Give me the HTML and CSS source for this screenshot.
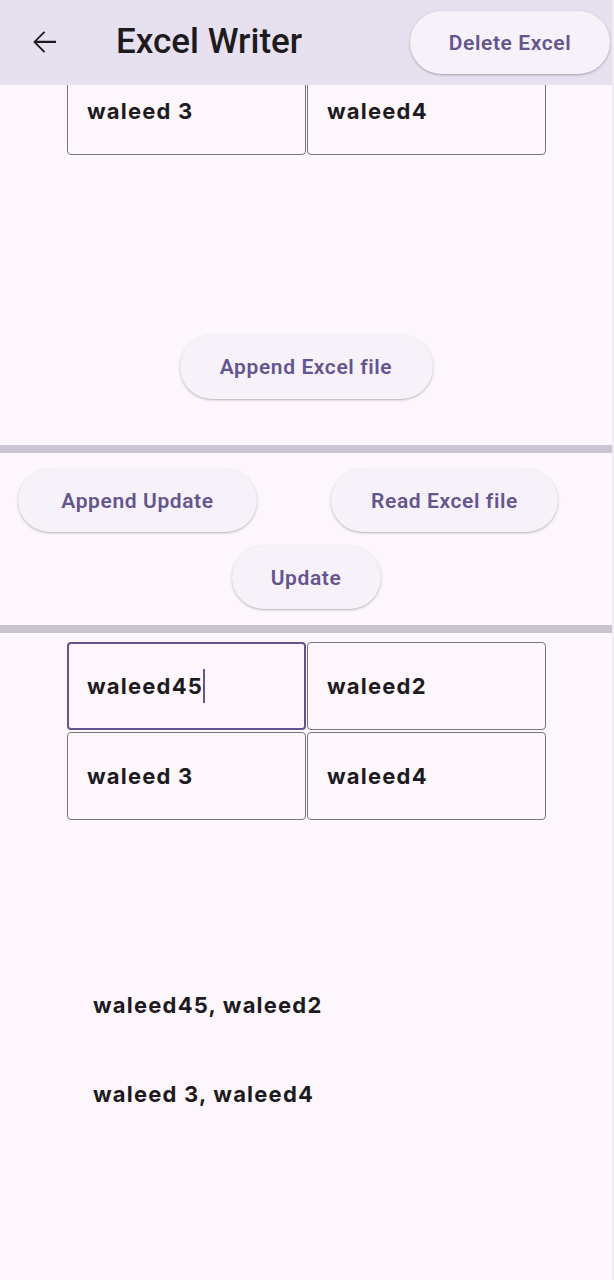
FILE: index.html
```html
<!DOCTYPE html>
<html>
<head>
<meta charset="utf-8">
<link rel="stylesheet" href="styles.css">
</head>
<body>
<div class="screen">
  <header class="appbar">
    <svg class="back" width="36" height="36" viewBox="0 0 24 24"><path d="M20 11.2H7.2l5.6-5.6L11.9 4.8 4.8 12l7.1 7.2.9-.9-5.6-5.6H20v-1.5z" fill="#1d1b20"/></svg>
    <h1 class="title">Excel Writer</h1>
    <button class="pill delete">Delete Excel</button>
  </header>
  <main class="content">
    <div class="clip">
      <div class="grid shifted">
        <div class="cell">waleed 3</div>
        <div class="cell">waleed4</div>
      </div>
    </div>
    <div class="row center first-btn">
      <button class="pill btn-append">Append Excel file</button>
    </div>
    <div class="divider d1"></div>
    <div class="row pair">
      <button class="pill btn-au">Append Update</button>
      <button class="pill btn-read">Read Excel file</button>
    </div>
    <div class="row center upd">
      <button class="pill btn-upd">Update</button>
    </div>
    <div class="divider d2"></div>
    <div class="grid fields">
      <div class="cell focused">waleed45<span class="caret"></span></div>
      <div class="cell">waleed2</div>
      <div class="cell">waleed 3</div>
      <div class="cell">waleed4</div>
    </div>
    <div class="results">
      <p class="line">waleed45, waleed2</p>
      <p class="line">waleed 3, waleed4</p>
    </div>
  </main>
</div>
</body>
</html>
```
FILE: styles.css
```css
html, body {
  margin: 0;
  padding: 0;
  background: #fdf7fd;
}
.screen {
  width: 614px;
  height: 1280px;
  overflow: hidden;
  background: #fdf7fd;
  font-family: Roboto, "Noto Sans", sans-serif;
  color: #1d1b20;
  box-sizing: border-box;
  border-right: 2px solid #f1ebf3;
}
.appbar {
  height: 85px;
  background: #e7e0ef;
  display: flex;
  align-items: center;
  box-sizing: border-box;
  padding-left: 26px;
  padding-bottom: 2px;
}
.back {
  display: block;
  flex: none;
}
.title {
  margin: 0 0 0 54px;
  font-size: 35px;
  font-weight: 500;
  letter-spacing: 0;
  flex: 1;
}
.pill {
  font-family: Roboto, "Noto Sans", sans-serif;
  font-weight: 600;
  font-size: 21px;
  letter-spacing: 0.6px;
  color: #65558f;
  background: #f7f2fa;
  border: none;
  border-radius: 32px;
  height: 63px;
  box-shadow: 0 1px 3px rgba(0,0,0,0.22), 0 1px 1px rgba(0,0,0,0.08);
  padding: 0;
  box-sizing: border-box;
}
.delete {
  width: 200px;
  margin-right: 2px;
  margin-top: 2px;
}
.content {
  display: flex;
  flex-direction: column;
}
.clip {
  height: 70px;
  overflow: hidden;
}
.grid {
  display: grid;
  grid-template-columns: 239px 239px;
  column-gap: 1px;
  row-gap: 2px;
  margin-left: 67px;
}
.shifted {
  margin-top: -18px;
}
.cell {
  height: 88px;
  box-sizing: border-box;
  border: 1px solid #79747e;
  border-radius: 4px;
  display: flex;
  align-items: center;
  padding-left: 19px;
  font-family: Inter, "Noto Sans", sans-serif;
  font-weight: 700;
  font-size: 22px;
  letter-spacing: 1.2px;
  color: #1d1b20;
}
.cell.focused {
  border: 2px solid #65558f;
  padding-left: 18px;
}
.caret {
  display: inline-block;
  width: 2px;
  height: 34px;
  background: #65558f;
  margin-left: 0;
}
.row {
  display: flex;
}
.center {
  justify-content: center;
}
.first-btn {
  margin-top: 180px;
}
.btn-append {
  width: 253px;
  height: 64px;
}
.divider {
  height: 8px;
  background: #cac4d0;
}
.d1 {
  margin-top: 46px;
}
.pair {
  margin-top: 16px;
  padding-left: 18px;
  gap: 74px;
}
.btn-au {
  width: 239px;
}
.btn-read {
  width: 227px;
}
.upd {
  margin-top: 14px;
}
.btn-upd {
  width: 149px;
}
.d2 {
  margin-top: 16px;
}
.fields {
  margin-top: 9px;
}
.results {
  padding-left: 93px;
  margin-top: 170px;
}
.line {
  margin: 0;
  height: 89px;
  line-height: 30px;
  font-family: Inter, "Noto Sans", sans-serif;
  font-weight: 700;
  font-size: 22px;
  letter-spacing: 1.2px;
  color: #1d1b20;
}
```
